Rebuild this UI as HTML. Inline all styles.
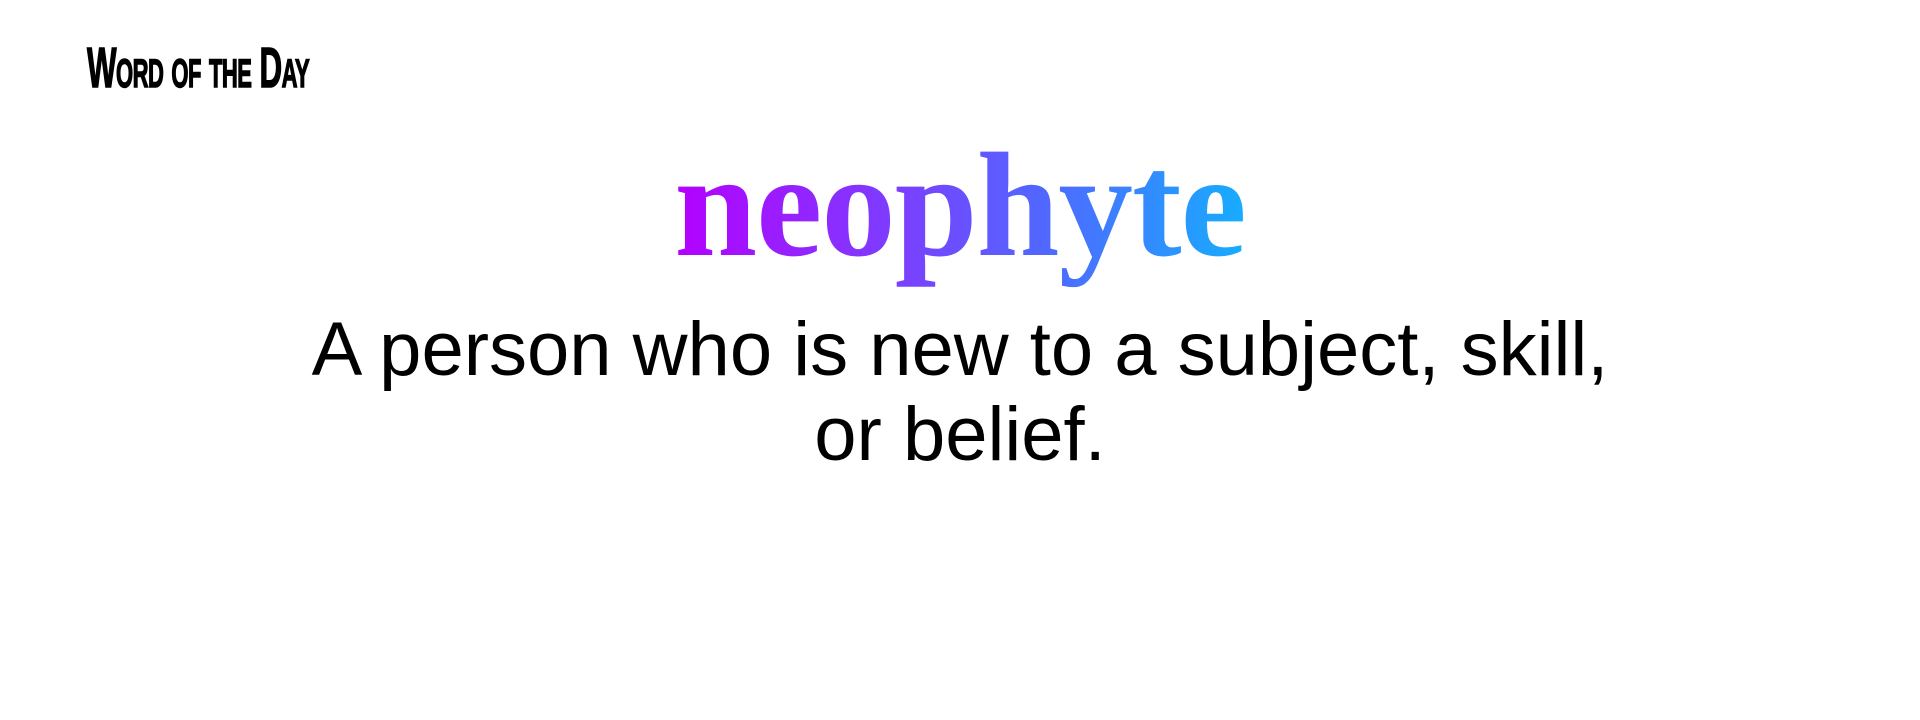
<!DOCTYPE html>
<html><head><meta charset="utf-8"><style>
html,body{margin:0;padding:0;background:#fff;width:1920px;height:720px;overflow:hidden}
.hdr{position:absolute;left:87px;top:32px;font-family:"Liberation Sans Narrow","Liberation Sans",sans-serif;font-weight:bold;font-size:57px;line-height:72px;font-variant:small-caps;color:#000;-webkit-text-stroke:1.5px #000;transform:scaleX(0.55);transform-origin:left top;white-space:nowrap;letter-spacing:-1px}
.word{position:absolute;left:0;width:1920px;top:121px;text-align:center;font-family:"Liberation Serif",serif;font-weight:bold;font-size:149px;line-height:170px;letter-spacing:-1px}
.word span{background:linear-gradient(90deg,#b400ff 0%,#7a40ff 40%,#5068ff 65%,#16adff 100%);-webkit-background-clip:text;background-clip:text;color:transparent;display:inline-block}
.def{position:absolute;left:0;width:1920px;top:307px;text-align:center;font-family:"Liberation Sans",sans-serif;font-size:76px;line-height:85px;color:#000}
</style></head><body>
<div class="hdr">Word of the Day</div>
<div class="word"><span>neophyte</span></div>
<div class="def">A person who is new to a subject, skill,<br>or belief.</div>
</body></html>
